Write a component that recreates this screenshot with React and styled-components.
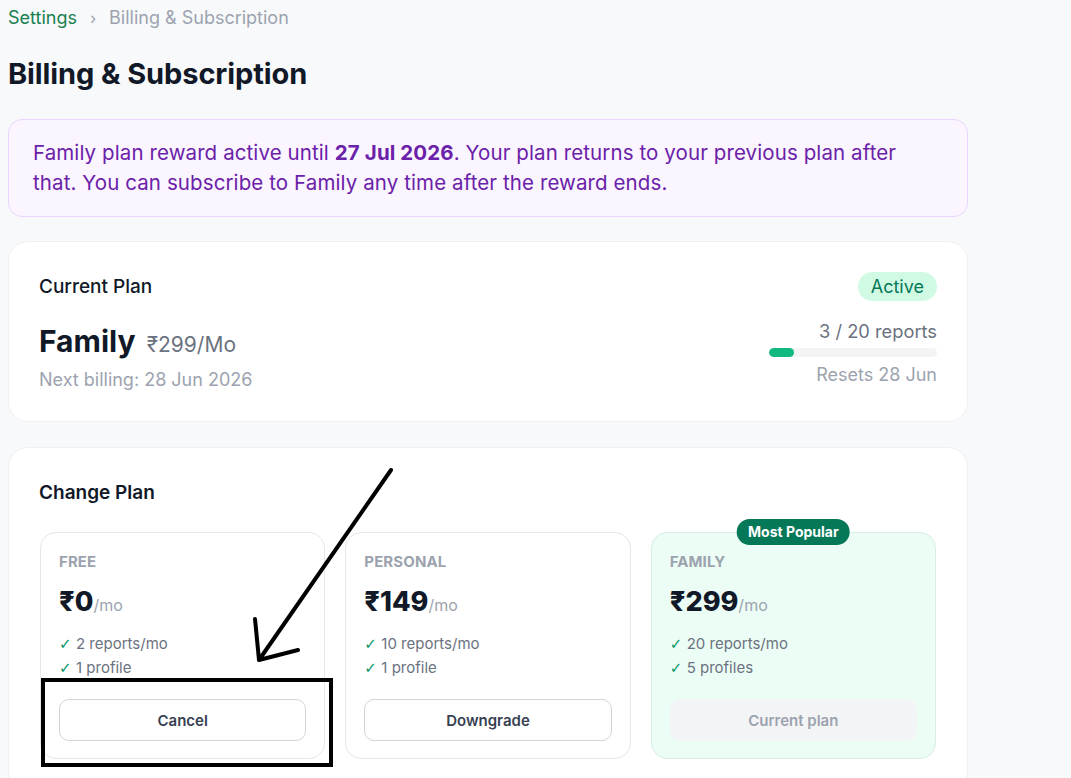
import React from "react";
import styled, { createGlobalStyle } from "styled-components";

const plans = [
  { id: "free", name: "FREE", price: "₹0", features: ["2 reports/mo", "1 profile"], action: "Cancel" },
  { id: "personal", name: "PERSONAL", price: "₹149", features: ["10 reports/mo", "1 profile"], action: "Downgrade" },
  { id: "family", name: "FAMILY", price: "₹299", features: ["20 reports/mo", "5 profiles"], action: "Current plan", current: true, popular: true },
];

export default function App() {
  const used = 3;
  const total = 20;

  return (
    <>
      <GlobalStyle />
      <Page>
        <Crumbs>
          <CrumbLink>Settings</CrumbLink>
          <CrumbSep>›</CrumbSep>
          <CrumbCurrent>Billing &amp; Subscription</CrumbCurrent>
        </Crumbs>
        <Title>Billing &amp; Subscription</Title>

        <Banner>
          Family plan reward active until <b>27 Jul 2026</b>. Your plan returns to your previous plan after
          that. You can subscribe to Family any time after the reward ends.
        </Banner>

        <Card>
          <PlanRow>
            <CardTitle>Current Plan</CardTitle>
            <Badge>Active</Badge>
          </PlanRow>
          <PlanRow>
            <div>
              <PlanName>
                Family <PlanPrice>₹299/Mo</PlanPrice>
              </PlanName>
              <Muted>Next billing: 28 Jun 2026</Muted>
            </div>
            <Usage>
              <UsageText>
                {used} / {total} reports
              </UsageText>
              <Track>
                <Fill style={{ width: `${(used / total) * 100}%` }} />
              </Track>
              <Muted $gap={6}>Resets 28 Jun</Muted>
            </Usage>
          </PlanRow>
        </Card>

        <Card $grow>
          <SectionTitle>Change Plan</SectionTitle>
          <PlanGrid>
            {plans.map((p) => (
              <PlanCard key={p.id} $current={p.current}>
                {p.popular && <Popular>Most Popular</Popular>}
                <TierName>{p.name}</TierName>
                <TierPrice>
                  {p.price}
                  <span>/mo</span>
                </TierPrice>
                <Features>
                  {p.features.map((f) => (
                    <li key={f}>
                      <Check>✓</Check>
                      {f}
                    </li>
                  ))}
                </Features>
                <PlanButton $current={p.current}>{p.action}</PlanButton>
              </PlanCard>
            ))}
          </PlanGrid>
        </Card>

        <Annotation width="1071" height="778" viewBox="0 0 1071 778">
          <rect x="43" y="680" width="288" height="85" fill="none" stroke="#000" strokeWidth="4" />
          <path d="M391 470 L259 660 M259 660 L255 619 M259 660 L298 650" fill="none" stroke="#000" strokeWidth="4" strokeLinecap="round" />
        </Annotation>
      </Page>
    </>
  );
}

const GlobalStyle = createGlobalStyle`
  body {
    margin: 0;
    background: #f8f9fb;
    font-family: Inter, "Noto Sans", sans-serif;
    color: #111827;
  }
`;

const Page = styled.div`
  position: relative;
  padding: 8px 8px 0;
  width: 960px;
  height: 770px;
  overflow: hidden;
`;

const Crumbs = styled.div`
  display: flex;
  align-items: center;
  gap: 13px;
  font-size: 18px;
  line-height: 20px;
`;

const CrumbLink = styled.span`
  color: #17804f;
`;

const CrumbSep = styled.span`
  color: #9ca3af;
  font-size: 16px;
`;

const CrumbCurrent = styled.span`
  color: #9ca3af;
`;

const Title = styled.h1`
  margin: 29px 0 28px;
  font-size: 29px;
  line-height: 34px;
  font-weight: 700;
  letter-spacing: -0.1px;
  color: #111827;
`;

const Banner = styled.div`
  background: #faf5ff;
  border: 1px solid #e9d5ff;
  border-radius: 14px;
  padding: 18px 24px;
  font-size: 20.5px;
  letter-spacing: 0.1px;
  line-height: 30px;
  color: #6b21a8;
  margin-bottom: 24px;

  b {
    font-weight: 700;
    color: #6b21a8;
  }
`;

const Card = styled.section`
  background: #fff;
  border: 1px solid #eef0f3;
  border-radius: 20px;
  padding: ${(p) => (p.$grow ? "31px 31px 40px" : "30px 30px 29px")};
  margin-bottom: 25px;
  display: flex;
  flex-direction: column;
  gap: ${(p) => (p.$grow ? "25px" : "17px")};
`;

const PlanRow = styled.div`
  display: flex;
  justify-content: space-between;
  align-items: flex-start;
`;

const CardTitle = styled.div`
  font-size: 19px;
  font-weight: 500;
  line-height: 28px;
  padding-top: 1px;
  color: #111827;
`;

const SectionTitle = styled(CardTitle)`
  font-weight: 600;
  padding-top: 0;
  padding-left: 0;
  margin-left: -1px;
`;

const Badge = styled.span`
  background: #d1fae5;
  color: #047857;
  font-size: 18px;
  line-height: 29px;
  padding: 0 13px;
  border-radius: 999px;
`;

const PlanName = styled.div`
  font-size: 30px;
  font-weight: 700;
  line-height: 38px;
  margin-top: 4px;
  color: #111827;
`;

const PlanPrice = styled.span`
  font-size: 21px;
  font-weight: 400;
  color: #6b7280;
  margin-left: 4px;
`;

const Muted = styled.div`
  font-size: 18px;
  line-height: 24px;
  color: #9ca3af;
  margin-top: ${(p) => p.$gap ?? 4}px;
`;

const Usage = styled.div`
  width: 168px;
  display: flex;
  flex-direction: column;
  align-items: flex-end;
`;

const UsageText = styled.div`
  font-size: 18.3px;
  line-height: 24px;
  margin-top: 1px;
  color: #6b7280;
  white-space: nowrap;
`;

const Track = styled.div`
  width: 100%;
  height: 9px;
  border-radius: 5px;
  background: #f3f4f6;
  margin: 5px 0 0;
  overflow: hidden;
`;

const Fill = styled.div`
  height: 100%;
  background: #10b981;
  border-radius: 5px;
`;

const PlanGrid = styled.div`
  display: grid;
  grid-template-columns: repeat(3, 1fr);
  gap: 20px;
`;

const PlanCard = styled.div`
  position: relative;
  border: 1px solid ${(p) => (p.$current ? "#d6efe2" : "#e5e7eb")};
  background: ${(p) => (p.$current ? "#ecfdf5" : "#fff")};
  border-radius: 16px;
  padding: 19px 18px 17px;
`;

const Popular = styled.span`
  position: absolute;
  top: -14px;
  left: 50%;
  transform: translateX(-50%);
  background: #047857;
  color: #fff;
  font-size: 14px;
  font-weight: 700;
  line-height: 26px;
  padding: 0 11px;
  border-radius: 999px;
  white-space: nowrap;
`;

const TierName = styled.div`
  font-size: 15px;
  font-weight: 700;
  line-height: 20px;
  color: #9ca3af;
  letter-spacing: 0.1px;
`;

const TierPrice = styled.div`
  margin-top: 12px;
  font-size: 27px;
  font-weight: 800;
  line-height: 36px;
  color: #111827;

  span {
    font-size: 16px;
    font-weight: 400;
    color: #9ca3af;
  }
`;

const Features = styled.ul`
  list-style: none;
  margin: 9px 0 0;
  padding: 0;
  font-size: 15px;
  line-height: 24px;
  color: #6b7280;
`;

const Check = styled.span`
  display: inline-block;
  width: 17px;
  color: #059669;
  font-family: "DejaVu Sans", sans-serif;
  font-size: 15px;
`;

const PlanButton = styled.button`
  display: block;
  width: 100%;
  height: 42px;
  margin-top: 19px;
  border-radius: 10px;
  font-family: inherit;
  font-size: 15px;
  font-weight: 600;
  border: 1px solid ${(p) => (p.$current ? "transparent" : "#d1d5db")};
  background: ${(p) => (p.$current ? "#f3f4f6" : "#fff")};
  color: ${(p) => (p.$current ? "#9ca3af" : "#374151")};
`;

const Annotation = styled.svg`
  position: absolute;
  top: 0;
  left: 0;
  pointer-events: none;
`;
